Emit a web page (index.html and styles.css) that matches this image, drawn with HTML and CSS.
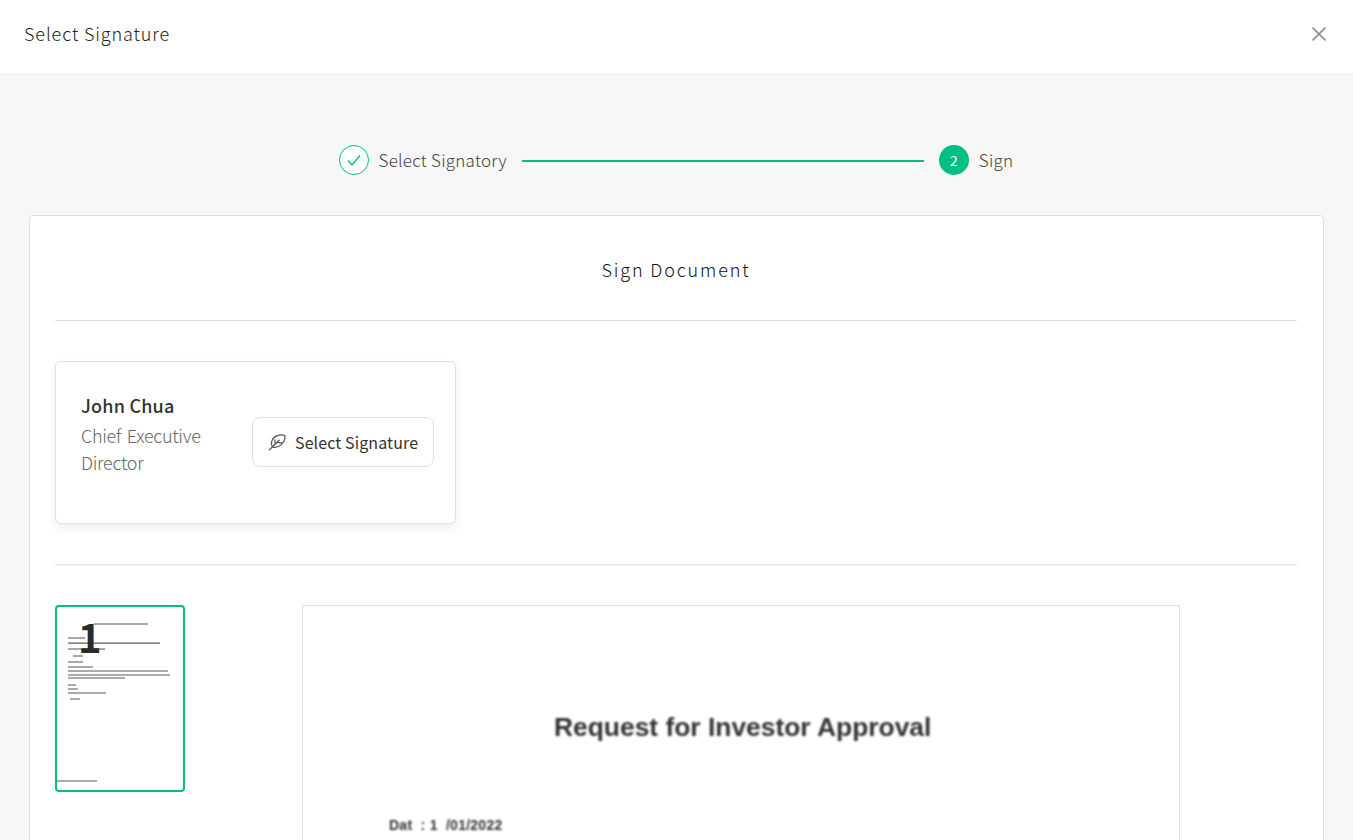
FILE: index.html
```html
<!DOCTYPE html>
<html lang="en">

<head>
	<meta charset="UTF-8">
	<meta name="viewport" content="width=device-width, initial-scale=1.0">
	<title>Select Signature</title>
	<link rel="stylesheet" href="styles.css">
</head>

<body>
	<div class="header">
		<div class="header-title">Select Signature</div>
		<svg class="close-icon" width="14" height="14" viewBox="0 0 14 14">
			<path d="M0.5 0.5 L13.5 13.5 M13.5 0.5 L0.5 13.5" />
		</svg>
	</div>
	<div class="content">
		<div class="stepper">
			<div class="step-circle step-done">
				<svg width="14" height="14" viewBox="0 0 14 14">
					<path d="M1 7.5 L5 12 L13 2.5" />
				</svg>
			</div>
			<div class="step-label">Select Signatory</div>
			<div class="step-line"></div>
			<div class="step-circle step-active">2</div>
			<div class="step-label">Sign</div>
		</div>
		<div class="panel">
			<div class="panel-title">Sign Document</div>
			<div class="signers">
				<div class="signer-card">
					<div class="signer-info">
						<div class="signer-name">John Chua</div>
						<div class="signer-role">Chief Executive Director</div>
					</div>
					<div class="btn">
						<svg width="18" height="18" viewBox="0 0 18 18">
							<path d="M17 2.5 C12 1 6 2.5 4 7.5 C3 10.5 3.8 13 5.2 14.2 C10.5 15.5 17.5 10 17 2.5 Z" />
							<path d="M1 17.2 L11.5 6.8 M7 11.3 L6.8 6.4 M9 9.4 L14 9.8" />
						</svg>
						<span>Select Signature</span>
					</div>
				</div>
			</div>
			<div class="viewer">
				<div class="thumb">
					<svg class="thumb-lines" width="126" height="183" viewBox="0 0 126 183">
						<rect x="37" y="16.5" width="54" height="1" />
						<rect x="11" y="30.5" width="17" height="1" />
						<rect x="11" y="35.5" width="92" height="1.2" />
						<rect x="11" y="41.5" width="37" height="1" />
						<rect x="16" y="48.5" width="10" height="1" />
						<rect x="11" y="54.5" width="15" height="1" />
						<rect x="11" y="59.5" width="25" height="1" />
						<rect x="11" y="63.5" width="100" height="1" />
						<rect x="11" y="67.5" width="102" height="1" />
						<rect x="11" y="70.5" width="57" height="1" />
						<rect x="11" y="77.5" width="8" height="1" />
						<rect x="11" y="81.5" width="10" height="1" />
						<rect x="11" y="85.5" width="38" height="1" />
						<rect x="13" y="91.5" width="10" height="1" />
						<rect x="0" y="173.5" width="40" height="1" />
					</svg>
					<div class="thumb-number">1</div>
				</div>
				<div class="page">
					<div class="page-title">Request for Investor Approval</div>
					<div class="page-date">Dat &nbsp;: 1 &nbsp;/01/2022</div>
				</div>
			</div>
		</div>
	</div>
</body>

</html>
```

FILE: styles.css
```css
body
{
	margin: 0;
	height: 840px;
	overflow: hidden;
	background-color: #f7f7f7;
	color: #333333;
	font-family: "Noto Sans CJK KR", "Noto Sans", sans-serif;
}

.header
{
	display: flex;
	align-items: center;
	justify-content: space-between;
	box-sizing: border-box;
	height: 75px;
	padding: 0 27px 6px 24px;
	background-color: #ffffff;
	border-bottom: 1px solid #ececec;
}

.header-title
{
	margin-top: -3px;
	font-size: 18px;
	font-weight: 300;
	letter-spacing: 0.9px;
	color: #222222;
}

.close-icon path
{
	fill: none;
	stroke: #8f8f8f;
	stroke-width: 1.6;
}

.content
{
	padding: 70px 29px 0;
}

.stepper
{
	display: flex;
	align-items: center;
	justify-content: center;
	height: 30px;
	margin-bottom: 40px;
	padding-right: 1px;
}

.step-circle
{
	display: flex;
	align-items: center;
	justify-content: center;
	box-sizing: border-box;
	width: 30px;
	height: 30px;
	border-radius: 50%;
	font-size: 14px;
}

.step-done
{
	border: 1px solid #00bf84;
	background-color: #ffffff;
}

.step-done path
{
	fill: none;
	stroke: #00bf84;
	stroke-width: 1.4;
}

.step-active
{
	background-color: #00bf84;
	color: #ffffff;
}

.step-label
{
	margin-left: 10px;
	padding-bottom: 2px;
	font-size: 17px;
	font-weight: 300;
	letter-spacing: 0.25px;
	color: #444444;
}

.step-line
{
	width: 402px;
	height: 2px;
	margin: 1px 15px 0;
	background-color: #00bf84;
}

.panel
{
	box-sizing: border-box;
	height: 640px;
	padding: 0 26px 0 25px;
	background-color: #ffffff;
	border: 1px solid #dedede;
	border-radius: 4px;
}

.panel-title
{
	height: 104px;
	line-height: 106px;
	text-align: center;
	font-size: 18px;
	font-weight: 300;
	letter-spacing: 1.85px;
	color: #111111;
	border-bottom: 1px solid #e0e0e0;
}

.signers
{
	padding: 40px 0;
	border-bottom: 1px solid #e0e0e0;
}

.signer-card
{
	display: flex;
	justify-content: space-between;
	box-sizing: border-box;
	width: 401px;
	height: 163px;
	padding: 27px 21px 0 25px;
	background-color: #ffffff;
	border: 1px solid #e0e0e0;
	border-radius: 6px;
	box-shadow: 0 4px 10px rgba(0, 0, 0, 0.08);
}

.signer-info
{
	width: 130px;
}

.signer-name
{
	font-size: 18px;
	font-weight: 500;
	line-height: 32px;
	letter-spacing: 0.2px;
	color: #333333;
}

.signer-role
{
	margin-top: 1px;
	font-size: 18px;
	font-weight: 300;
	line-height: 27px;
	letter-spacing: -0.3px;
	word-spacing: 2px;
	color: #666666;
}

.btn
{
	display: flex;
	align-items: center;
	gap: 9px;
	box-sizing: border-box;
	width: 182px;
	height: 50px;
	margin-top: 28px;
	padding-left: 15px;
	background-color: #ffffff;
	border: 1px solid #e0e0e0;
	border-radius: 8px;
	font-size: 16px;
	letter-spacing: 0.1px;
	color: #333333;
}

.btn path
{
	fill: none;
	stroke: #555555;
	stroke-width: 1.2;
}

.viewer
{
	display: flex;
	align-items: flex-start;
	gap: 117px;
	padding-top: 40px;
}

.thumb
{
	position: relative;
	box-sizing: border-box;
	flex: none;
	width: 130px;
	height: 187px;
	border: 2px solid #00bf84;
	border-radius: 4px;
}

.thumb-lines
{
	display: block;
	filter: blur(0.6px);
}

.thumb-lines rect
{
	fill: #555555;
}

.thumb-number
{
	position: absolute;
	top: 2px;
	left: 21px;
	font-size: 40px;
	font-weight: 700;
	line-height: 54px;
	color: #2b2b2b;
}

.page
{
	box-sizing: border-box;
	width: 878px;
	height: 400px;
	border: 1px solid #dedede;
	font-family: "Liberation Sans", Arial, sans-serif;
	color: #333333;
}

.page-title
{
	padding-top: 103px;
	padding-left: 251px;
	font-size: 26.4px;
	font-weight: 700;
	line-height: 36px;
	filter: blur(0.8px);
}

.page-date
{
	padding-top: 70px;
	padding-left: 86px;
	font-size: 14px;
	font-weight: 700;
	line-height: 20px;
	letter-spacing: 0.25px;
	filter: blur(0.8px);
}
```
